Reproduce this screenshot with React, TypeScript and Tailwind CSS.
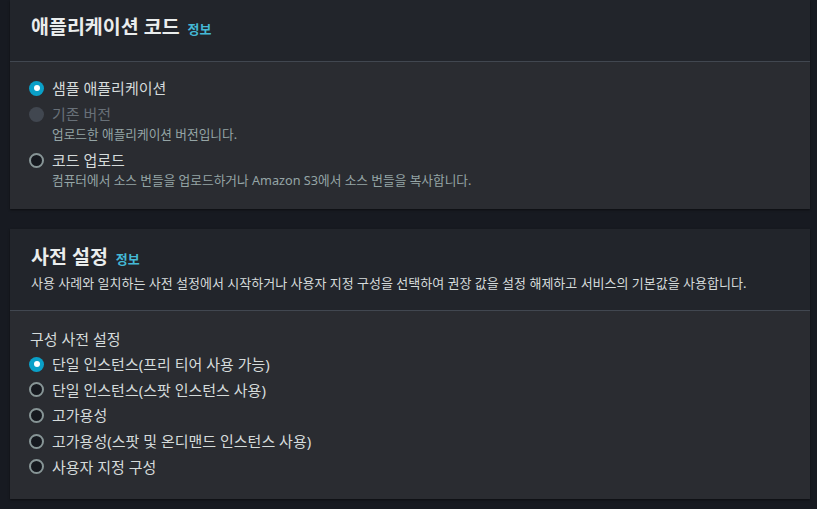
import React from 'react';

type Option = {
  label: string;
  description?: string;
  checked?: boolean;
  disabled?: boolean;
};

const CODE_OPTIONS: Option[] = [
  { label: '샘플 애플리케이션', checked: true },
  { label: '기존 버전', description: '업로드한 애플리케이션 버전입니다.', disabled: true },
  {
    label: '코드 업로드',
    description: '컴퓨터에서 소스 번들을 업로드하거나 Amazon S3에서 소스 번들을 복사합니다.',
  },
];

const PRESET_OPTIONS: Option[] = [
  { label: '단일 인스턴스(프리 티어 사용 가능)', checked: true },
  { label: '단일 인스턴스(스팟 인스턴스 사용)' },
  { label: '고가용성' },
  { label: '고가용성(스팟 및 온디맨드 인스턴스 사용)' },
  { label: '사용자 지정 구성' },
];

function RadioDot({ checked, disabled }: { checked?: boolean; disabled?: boolean }) {
  if (disabled) {
    return <span className="-ml-px h-[15px] w-[15px] shrink-0 rounded-full bg-[#414750]" />;
  }
  if (checked) {
    return (
      <span className="-ml-px flex h-[15px] w-[15px] shrink-0 items-center justify-center rounded-full bg-[#0aa0c8]">
        <span className="h-[6px] w-[6px] rounded-full bg-white" />
      </span>
    );
  }
  return <span className="-ml-px h-[15px] w-[15px] shrink-0 rounded-full border-2 border-[#879596] bg-[#16191f]" />;
}

function RadioItem({ option }: { option: Option }) {
  return (
    <div className="flex flex-col">
      <div className="flex h-5 items-center gap-[8px]">
        <RadioDot checked={option.checked} disabled={option.disabled} />
        <span
          className={`text-[15px] leading-5 ${option.disabled ? 'text-[#687078]' : 'text-[#d5dbdb]'}`}
        >
          {option.label}
        </span>
      </div>
      {option.description && (
        <p className="pl-[22px] text-[12.7px] leading-5 text-[#95a5a6]">{option.description}</p>
      )}
    </div>
  );
}

function Heading({ children }: { children: React.ReactNode }) {
  return (
    <h2 className="flex items-baseline gap-[8px] text-[19.5px] font-bold leading-[22px] text-[#eaeded]">
      {children}
      <span className="text-[13px] font-bold text-[#44b9d6]">정보</span>
    </h2>
  );
}

export default function App() {
  return (
    <div
      className="min-h-[509px] w-[817px] bg-[#171a21] pl-[10px]"
      style={{ fontFamily: '"Noto Sans", "Noto Sans CJK KR", sans-serif' }}
    >
      <section className="w-[800px] shadow-[0_1px_2px_rgba(0,0,0,0.5)]">
        <div className="border-b border-[#414750] bg-[#22252b] px-[21px] pb-[21px] pt-[16px]">
          <Heading>애플리케이션 코드</Heading>
        </div>
        <div className="flex flex-col gap-[6px] bg-[#2a2c31] px-[20px] pb-[19px] pt-[16px]">
          {CODE_OPTIONS.map((o) => (
            <RadioItem key={o.label} option={o} />
          ))}
        </div>
      </section>

      <section className="mt-[20px] w-[800px] shadow-[0_1px_2px_rgba(0,0,0,0.5)]">
        <div className="border-b border-[#414750] bg-[#22252b] px-[21px] pb-[19px] pt-[17px]">
          <Heading>사전 설정</Heading>
          <p className="mt-[5px] text-[13px] leading-4 text-[#d5dbdb]">
            사용 사례와 일치하는 사전 설정에서 시작하거나 사용자 지정 구성을 선택하여 권장 값을 설정 해제하고 서비스의 기본값을 사용합니다.
          </p>
        </div>
        <div className="flex flex-col bg-[#2a2c31] px-[20px] pb-[22px] pt-[18px]">
          <p className="mb-[5px] text-[15px] leading-5 text-[#d5dbdb]">구성 사전 설정</p>
          <div className="flex flex-col gap-[5.7px]">
            {PRESET_OPTIONS.map((o) => (
              <RadioItem key={o.label} option={o} />
            ))}
          </div>
        </div>
      </section>
    </div>
  );
}
